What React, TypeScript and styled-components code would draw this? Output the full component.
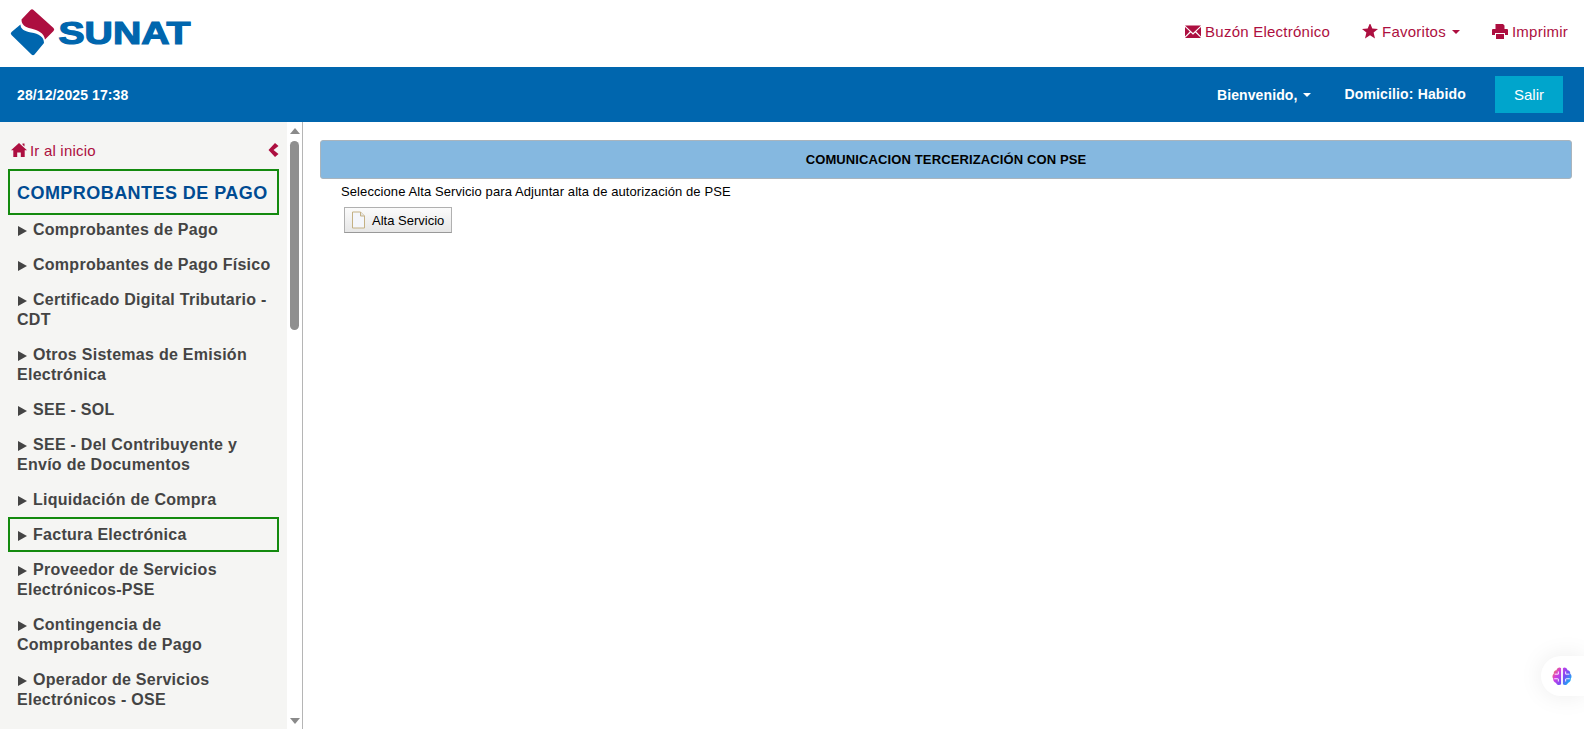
import React from "react";
import styled, { createGlobalStyle } from "styled-components";

const Global = createGlobalStyle`
  html, body { margin: 0; padding: 0; height: 100%; background: #fff; overflow: hidden; }
  body { font-family: "Liberation Sans", Arial, sans-serif; }
  #root { height: 100%; }
`;

const Page = styled.div`
  display: flex;
  flex-direction: column;
  width: 1584px;
  height: 729px;
  position: relative;
  overflow: hidden;
`;

const TopBar = styled.header`
  height: 67px;
  flex: none;
  display: flex;
  align-items: center;
  justify-content: space-between;
  padding: 0 16px 0 0;
  background: #fff;
`;

const LogoMark = styled.svg`
  display: block;
  width: 200px;
  height: 66px;
  align-self: flex-start;
`;

const TopLinks = styled.nav`
  display: flex;
  align-items: center;
  gap: 32px;
  margin-bottom: 4px;
`;

const TopLink = styled.a`
  display: flex;
  align-items: center;
  gap: 4px;
  color: #ad0f40;
  font-size: 15px;
  line-height: 20px;
  letter-spacing: 0.24px;
`;

const Icon = styled.svg<{ $size: number }>`
  display: block;
  width: ${(p) => p.$size}px;
  height: ${(p) => p.$size}px;
  fill: #ad0f40;
  flex: none;
`;

const Caret = styled.span<{ $color: string }>`
  display: inline-block;
  width: 0;
  height: 0;
  margin-left: 4px;
  border-top: 4px solid ${(p) => p.$color};
  border-left: 4px solid transparent;
  border-right: 4px solid transparent;
`;

const TopCaret = styled(Caret)`
  margin-left: 2px;
`;

const BlueBar = styled.div`
  height: 55px;
  flex: none;
  background: #0066ae;
  color: #fff;
  display: flex;
  align-items: center;
  justify-content: space-between;
  padding: 0 21px 0 17px;
  font-weight: bold;
  font-size: 14px;
`;

const DateText = styled.span`
  letter-spacing: 0.1px;
`;

const UserArea = styled.div`
  display: flex;
  align-items: center;
`;

const Welcome = styled.span`
  display: flex;
  align-items: center;
  gap: 2px;
  letter-spacing: 0.1px;
  margin-right: 33px;
  padding-top: 1px;
`;

const Domicile = styled.span`
  letter-spacing: 0.15px;
  margin-right: 29px;
  padding-bottom: 1px;
`;

const ExitButton = styled.button`
  width: 68px;
  height: 37px;
  margin: 0;
  border: 0;
  padding: 0;
  background: #00a5cc;
  color: #fff;
  font: 15px "Liberation Sans", Arial, sans-serif;
`;

const Body = styled.div`
  flex: 1;
  min-height: 0;
  display: flex;
`;

const Sidebar = styled.aside`
  width: 302px;
  flex: none;
  display: flex;
  border-right: 1px solid #b5b5b5;
  box-sizing: content-box;
`;

const Menu = styled.div`
  width: 287px;
  flex: none;
  background: #f5f5f3;
  padding: 18px 8px 0;
  box-sizing: border-box;
  overflow: hidden;
`;

const HomeRow = styled.div`
  display: flex;
  align-items: center;
  justify-content: space-between;
  height: 20px;
  margin-bottom: 9px;
  padding: 0 0 0 3px;
  color: #ad0f40;
  font-size: 15px;
  letter-spacing: 0.2px;
`;

const HomeLink = styled.span`
  display: flex;
  align-items: center;
  gap: 3px;
`;

const MenuTitle = styled.div`
  height: 46px;
  margin-bottom: -3px;
  box-sizing: border-box;
  border: 2px solid #138a0e;
  padding: 3px 7px 0;
  display: flex;
  align-items: center;
  color: #004b92;
  font-size: 18px;
  font-weight: bold;
  letter-spacing: 0.45px;
  white-space: nowrap;
`;

const MenuItem = styled.div<{ $active?: boolean }>`
  border: 2px solid ${(p) => (p.$active ? "#138a0e" : "transparent")};
  padding: 6px 3px 5px 7px;
  color: #444;
  font-size: 16px;
  font-weight: bold;
  line-height: 20px;
  letter-spacing: 0.27px;
`;

const Arrow = styled.span`
  display: inline-block;
  width: 0;
  height: 0;
  margin: 0 6px 0 1px;
  vertical-align: -1px;
  border-left: 9px solid #444;
  border-top: 5px solid transparent;
  border-bottom: 5px solid transparent;
`;

const ScrollTrack = styled.div`
  width: 15px;
  flex: none;
  background: #fff;
  display: flex;
  flex-direction: column;
  align-items: center;
  padding: 6px 0 5px;
  box-sizing: border-box;
`;

const ScrollUp = styled.span`
  width: 0;
  height: 0;
  border-bottom: 6px solid #8a8a8a;
  border-left: 5px solid transparent;
  border-right: 5px solid transparent;
`;

const ScrollDown = styled(ScrollUp)`
  border-bottom: 0;
  border-top: 6px solid #8a8a8a;
  margin-top: auto;
`;

const ScrollThumb = styled.span`
  width: 9px;
  height: 189px;
  margin-top: 7px;
  border-radius: 5px;
  background: #8f8f8f;
`;

const Main = styled.main`
  flex: 1;
  min-width: 0;
  padding: 18px 12px 0 17px;
`;

const Title = styled.div`
  height: 39px;
  box-sizing: border-box;
  border: 1px solid #a9b4bd;
  border-radius: 3px;
  background: #85b8e0;
  display: flex;
  align-items: center;
  justify-content: center;
  color: #000;
  font-size: 13px;
  font-weight: bold;
  letter-spacing: 0.12px;
`;

const Hint = styled.p`
  margin: 5px 0 0 21px;
  font-size: 13px;
  line-height: 16px;
  letter-spacing: 0.09px;
  color: #000;
`;

const ActionButton = styled.button`
  display: flex;
  align-items: center;
  gap: 6px;
  box-sizing: border-box;
  width: 108px;
  height: 26px;
  margin: 7px 0 0 24px;
  padding: 0 0 0 6px;
  border: 1px solid #b0b0b0;
  border-bottom-color: #999;
  background: linear-gradient(#fbfbfb, #e6e6e6);
  color: #000;
  font: 13px "Liberation Sans", Arial, sans-serif;
`;

const DocIcon = styled.svg`
  display: block;
  width: 15px;
  height: 18px;
  flex: none;
`;

const Assistant = styled.div`
  position: absolute;
  right: 0;
  bottom: 33px;
  width: 43px;
  height: 40px;
  padding-left: 10px;
  box-sizing: border-box;
  display: flex;
  align-items: center;
  background: #fff;
  border-radius: 20px 0 0 20px;
  box-shadow: 0 0 24px rgba(0, 0, 0, 0.08);
`;

const BrainIcon = styled.svg`
  display: block;
  width: 22px;
  height: 22px;
`;

const items: { label: string; active?: boolean }[] = [
  { label: "Comprobantes de Pago" },
  { label: "Comprobantes de Pago Físico" },
  { label: "Certificado Digital Tributario - CDT" },
  { label: "Otros Sistemas de Emisión Electrónica" },
  { label: "SEE - SOL" },
  { label: "SEE - Del Contribuyente y Envío de Documentos" },
  { label: "Liquidación de Compra" },
  { label: "Factura Electrónica", active: true },
  { label: "Proveedor de Servicios Electrónicos-PSE" },
  { label: "Contingencia de Comprobantes de Pago" },
  { label: "Operador de Servicios Electrónicos - OSE" },
];

export default function App() {
  return (
    <Page>
      <Global />
      <TopBar>
        <LogoMark viewBox="0 0 200 66">
          <path d="M30.500 10 Q32 8.500 33.500 10 L53.500 28 Q55 29.500 53.500 31 L45 39.500 C44 33 38 30 31 28.500 C25 27 21.500 25 21.500 19.500 Z" fill="#ad0f40" />
          <path d="M11.500 32 L20.500 24.500 C20.500 29 24 31 31 32.500 C39 34 44 36.500 44 43 L34.500 54.500 Q33 56 31.500 54.500 L11.500 35 Q10 33.500 11.500 32 Z" fill="#0066ae" />
          <text x="58.500" y="43.500" fontFamily="Liberation Sans" fontWeight="bold" fontSize="31" textLength="132" lengthAdjust="spacingAndGlyphs" fill="#0066ae" stroke="#0066ae" strokeWidth="1.2">SUNAT</text>
        </LogoMark>
        <TopLinks>
          <TopLink>
            <Icon $size={16} viewBox="0 0 16 16">
              <path d="M0 1.500h16L8 9zM0 3 4.800 7.500 0 12.500zM16 3 11.200 7.500 16 12.500zM5.700 8.500 8 10.700 10.300 8.500 16 14H0z" />
            </Icon>
            Buzón Electrónico
          </TopLink>
          <TopLink>
            <Icon $size={16} viewBox="0 0 16 16">
              <path d="M8 -1l2.300 5.500 5.700.4-4.400 3.700 1.400 5.900L8 11.300 3 14.500l1.400-5.900L0 4.900l5.700-.4z" />
            </Icon>
            <span>Favoritos</span>
            <TopCaret $color="#ad0f40" />
          </TopLink>
          <TopLink>
            <Icon $size={16} viewBox="0 0 16 16">
              <path d="M3.500 0h7.500l1.500 1.500V5h-9zM0 6q0-1 1-1h14q1 0 1 1v5h-3V9H3v2H0zM4 10h8v5H4z" />
            </Icon>
            Imprimir
          </TopLink>
        </TopLinks>
      </TopBar>
      <BlueBar>
        <DateText>28/12/2025 17:38</DateText>
        <UserArea>
          <Welcome>
            Bienvenido,
            <Caret $color="#fff" />
          </Welcome>
          <Domicile>Domicilio: Habido</Domicile>
          <ExitButton>Salir</ExitButton>
        </UserArea>
      </BlueBar>
      <Body>
        <Sidebar>
          <Menu>
            <HomeRow>
              <HomeLink>
                <Icon $size={16} viewBox="0 0 16 16">
                  <path d="M8 1 16 8.200h-2.300V15H9.800v-4.500H6.200V15H2.300V8.200H0zM11.500 1.500h2v3l-2-1.800z" />
                </Icon>
                Ir al inicio
              </HomeLink>
              <Icon $size={14} viewBox="0 0 14 14">
                <path d="M10 0 13.500 3 8.500 7l5 4-3.500 3-6.500-7z" />
              </Icon>
            </HomeRow>
            <MenuTitle>COMPROBANTES DE PAGO</MenuTitle>
            {items.map((it) => (
              <MenuItem key={it.label} $active={it.active}>
                <Arrow />
                {it.label}
              </MenuItem>
            ))}
          </Menu>
          <ScrollTrack>
            <ScrollUp />
            <ScrollThumb />
            <ScrollDown />
          </ScrollTrack>
        </Sidebar>
        <Main>
          <Title>COMUNICACION TERCERIZACIÓN CON PSE</Title>
          <Hint>Seleccione Alta Servicio para Adjuntar alta de autorización de PSE</Hint>
          <ActionButton>
            <DocIcon viewBox="0 0 15 18">
              <path d="M1.500 1h8l4 4v12h-12z" fill="#f4f6fb" stroke="#c4b184" />
              <path d="M9.500 1v4h4" fill="#e6e6e6" stroke="#c4b184" />
            </DocIcon>
            Alta Servicio
          </ActionButton>
        </Main>
      </Body>
      <Assistant>
        <BrainIcon viewBox="0 0 24 24">
          <defs>
            <linearGradient id="brainGrad" x1="0" y1="0" x2="1" y2="0.6">
              <stop offset="0" stopColor="#f7931e" />
              <stop offset="0.35" stopColor="#d63be0" />
              <stop offset="0.7" stopColor="#7a4df5" />
              <stop offset="1" stopColor="#1fa5f5" />
            </linearGradient>
          </defs>
          <path d="M11 3.500V21c-2 1.500-5 .5-5.500-1.500C3.500 19 2 17 2.500 15 1 13.500 1.500 10.500 3 9.500 2.800 7.500 4 6 6 5.800 6.500 3 9.500 2 11 3.500zM13 3.500C14.500 2 17.500 3 18 5.800c2 .2 3.200 1.700 3 3.700 1.500 1 2 4 .5 5.500.5 2-1 4-3 4.500-.5 2-3.500 3-5.500 1.500z" fill="url(#brainGrad)" />
          <path d="M4 10h4M3.500 15h4M8 7v3M8 15v3M20 10h-4M20.500 15h-4M16 7v3M16 15v3" stroke="#fff" strokeWidth="1" fill="none" />
        </BrainIcon>
      </Assistant>
    </Page>
  );
}
